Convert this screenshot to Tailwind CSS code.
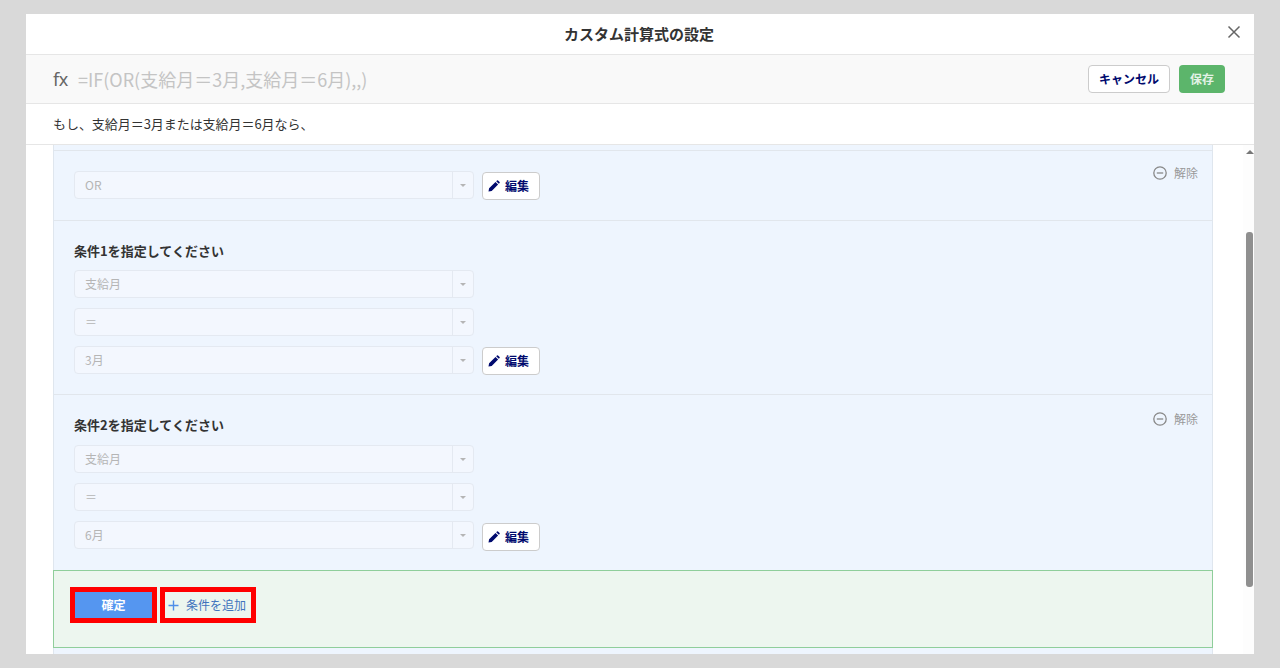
<!DOCTYPE html>
<html lang="ja">
<head>
  <meta charset="UTF-8" />
  <title>カスタム計算式の設定</title>
  <script src="https://cdn.jsdelivr.net/npm/@tailwindcss/browser@4"></script>
</head>
<body class="bg-[#d9d9d9] h-[668px] overflow-hidden font-['Noto_Sans_CJK_JP','Noto_Sans',sans-serif]">
  <div class="mx-[26px] mt-[14px] w-[1228px] h-[640px] bg-white flex flex-col overflow-hidden">
    <!-- Header -->
    <header class="relative h-[41px] shrink-0 border-b border-[#e6e6e6] pr-[2px] flex items-center justify-center">
      <h1 class="text-[15px] font-bold text-[#333]">カスタム計算式の設定</h1>
      <svg class="absolute right-[13px] top-[11px] w-[14px] h-[14px] text-[#666]" viewBox="0 0 14 14" fill="none" stroke="currentColor" stroke-width="1.5"><path d="M1.5 1.5l11 11M12.5 1.5l-11 11"/></svg>
    </header>

    <!-- Formula bar -->
    <div class="h-[49px] shrink-0 bg-[#f9f9f9] border-b border-[#e6e6e6] pl-[27px] pr-[29px] flex items-center">
      <span class="text-[18px] text-[#666] w-[25px] font-['Noto_Sans',sans-serif] tracking-[-0.5px]">fx</span>
      <span class="text-[18px] text-[#c4c4c4]">=IF(OR(支給月＝3月,支給月＝6月),,)</span>
      <button class="ml-auto w-[82px] h-[28px] bg-white border border-[#ccc] rounded-[4px] text-[12px] font-bold text-[#000a6e]">キャンセル</button>
      <button class="ml-[9px] w-[46px] h-[28px] bg-[#5cb56b] rounded-[4px] text-[12px] font-bold text-[#e2f2e5]">保存</button>
    </div>

    <!-- Formula description -->
    <div class="h-[41px] shrink-0 border-b border-[#e6e6e6] pl-[27px] flex items-center text-[13px] tracking-[-0.05px] text-[#333]">もし、支給月＝3月または支給月＝6月なら、</div>

    <!-- Scroll area -->
    <div class="flex-1 min-h-0 flex overflow-hidden">
      <div class="w-[1217px] shrink-0 pl-[27px] pr-[30px]">
        <div class="w-[1160px] h-[510px] bg-[#eef5fe] border-x border-[#dfe6ee] pt-[5px]">
          <!-- OR -->
          <section class="relative h-[71px] border-y border-[#e1e6ec] pl-[20px] pt-[20px]">
            <div class="flex items-start gap-[8px]">
              <div class="w-[400px] h-[28px] bg-[#f3f7fe] border border-[#e4e9f1] rounded-[4px] flex items-center text-[12px] text-[#b5b5b5]"><span class="flex-1 pl-[10px]">OR</span><span class="w-[21px] h-full border-l border-[#e4e9f1] flex items-center justify-center"><span class="border-x-[3px] border-t-[3px] border-x-transparent border-t-[#b5b5b5]"></span></span></div>
              <button class="mt-[1px] w-[58px] h-[28px] bg-white border border-[#ccc] rounded-[4px] pl-[5px] flex items-center gap-[5px] text-[12px] font-bold text-[#000a6e]"><svg class="w-[12px] h-[12px]" viewBox="0 0 12 12" fill="currentColor"><path d="M0.5 11.5l0.6-3.2 6.4-6.4 2.6 2.6-6.4 6.4zM8.2 1.2l0.8-0.8q0.5-0.4 1 0l1.6 1.6q0.4 0.5 0 1l-0.8 0.8z"/></svg>編集</button>
            </div>
            <span class="absolute right-[14px] top-[13px] flex items-center gap-[7px] text-[12px] text-[#999]"><svg class="w-[14px] h-[14px] text-[#888]" viewBox="0 0 14 14" fill="none" stroke="currentColor" stroke-width="1.3"><circle cx="7" cy="7" r="6.2"/><path d="M3.8 7h6.4"/></svg>解除</span>
          </section>

          <!-- Condition 1 -->
          <section class="h-[174px] border-b border-[#e1e6ec] pl-[20px] pt-[19px]">
            <h2 class="h-[30px] text-[13px] font-bold leading-[22px] text-[#333]">条件1を指定してください</h2>
            <div class="flex flex-col gap-[10px]">
              <div class="w-[400px] h-[28px] bg-[#f3f7fe] border border-[#e4e9f1] rounded-[4px] flex items-center text-[12px] text-[#b5b5b5]"><span class="flex-1 pl-[10px]">支給月</span><span class="w-[21px] h-full border-l border-[#e4e9f1] flex items-center justify-center"><span class="border-x-[3px] border-t-[3px] border-x-transparent border-t-[#b5b5b5]"></span></span></div>
              <div class="w-[400px] h-[28px] bg-[#f3f7fe] border border-[#e4e9f1] rounded-[4px] flex items-center text-[12px] text-[#b5b5b5]"><span class="flex-1 pl-[10px]">＝</span><span class="w-[21px] h-full border-l border-[#e4e9f1] flex items-center justify-center"><span class="border-x-[3px] border-t-[3px] border-x-transparent border-t-[#b5b5b5]"></span></span></div>
              <div class="flex items-start gap-[8px]">
                <div class="w-[400px] h-[28px] bg-[#f3f7fe] border border-[#e4e9f1] rounded-[4px] flex items-center text-[12px] text-[#b5b5b5]"><span class="flex-1 pl-[10px]">3月</span><span class="w-[21px] h-full border-l border-[#e4e9f1] flex items-center justify-center"><span class="border-x-[3px] border-t-[3px] border-x-transparent border-t-[#b5b5b5]"></span></span></div>
                <button class="mt-[1px] w-[58px] h-[28px] bg-white border border-[#ccc] rounded-[4px] pl-[5px] flex items-center gap-[5px] text-[12px] font-bold text-[#000a6e]"><svg class="w-[12px] h-[12px]" viewBox="0 0 12 12" fill="currentColor"><path d="M0.5 11.5l0.6-3.2 6.4-6.4 2.6 2.6-6.4 6.4zM8.2 1.2l0.8-0.8q0.5-0.4 1 0l1.6 1.6q0.4 0.5 0 1l-0.8 0.8z"/></svg>編集</button>
              </div>
            </div>
          </section>

          <!-- Condition 2 -->
          <section class="relative h-[175px] pl-[20px] pt-[19px]">
            <h2 class="h-[31px] text-[13px] font-bold leading-[22px] text-[#333]">条件2を指定してください</h2>
            <div class="flex flex-col gap-[10px]">
              <div class="w-[400px] h-[28px] bg-[#f3f7fe] border border-[#e4e9f1] rounded-[4px] flex items-center text-[12px] text-[#b5b5b5]"><span class="flex-1 pl-[10px]">支給月</span><span class="w-[21px] h-full border-l border-[#e4e9f1] flex items-center justify-center"><span class="border-x-[3px] border-t-[3px] border-x-transparent border-t-[#b5b5b5]"></span></span></div>
              <div class="w-[400px] h-[28px] bg-[#f3f7fe] border border-[#e4e9f1] rounded-[4px] flex items-center text-[12px] text-[#b5b5b5]"><span class="flex-1 pl-[10px]">＝</span><span class="w-[21px] h-full border-l border-[#e4e9f1] flex items-center justify-center"><span class="border-x-[3px] border-t-[3px] border-x-transparent border-t-[#b5b5b5]"></span></span></div>
              <div class="flex items-start gap-[8px]">
                <div class="w-[400px] h-[28px] bg-[#f3f7fe] border border-[#e4e9f1] rounded-[4px] flex items-center text-[12px] text-[#b5b5b5]"><span class="flex-1 pl-[10px]">6月</span><span class="w-[21px] h-full border-l border-[#e4e9f1] flex items-center justify-center"><span class="border-x-[3px] border-t-[3px] border-x-transparent border-t-[#b5b5b5]"></span></span></div>
                <button class="mt-[2px] w-[58px] h-[28px] bg-white border border-[#ccc] rounded-[4px] pl-[5px] flex items-center gap-[5px] text-[12px] font-bold text-[#000a6e]"><svg class="w-[12px] h-[12px]" viewBox="0 0 12 12" fill="currentColor"><path d="M0.5 11.5l0.6-3.2 6.4-6.4 2.6 2.6-6.4 6.4zM8.2 1.2l0.8-0.8q0.5-0.4 1 0l1.6 1.6q0.4 0.5 0 1l-0.8 0.8z"/></svg>編集</button>
              </div>
            </div>
            <span class="absolute right-[14px] top-[15px] flex items-center gap-[7px] text-[12px] text-[#999]"><svg class="w-[14px] h-[14px] text-[#888]" viewBox="0 0 14 14" fill="none" stroke="currentColor" stroke-width="1.3"><circle cx="7" cy="7" r="6.2"/><path d="M3.8 7h6.4"/></svg>解除</span>
          </section>

          <!-- Confirm -->
          <section class="-mx-px h-[78px] bg-[#edf6ef] border border-[#8fce9b] pl-[16px] pt-[16px] flex items-start gap-[3px]">
            <button class="w-[87px] h-[36px] border-[5px] border-[#ff0000] bg-[#5596f0] text-[12px] font-bold text-white">確定</button>
            <button class="w-[96px] h-[36px] border-[5px] border-[#ff0000] flex items-center pl-[3px] text-[12px] text-[#3f73bd]"><svg class="w-[11px] h-[11px] mr-[7px] text-[#4f8fe8]" viewBox="0 0 11 11" fill="none" stroke="currentColor" stroke-width="1.4"><path d="M5.5 0.5v10M0.5 5.5h10"/></svg>条件を追加</button>
          </section>
        </div>
      </div>

      <!-- Scrollbar -->
      <div class="w-[11px] shrink-0 bg-[#fdfdfd] flex flex-col items-center">
        <span class="mt-[5px] ml-[2px] border-x-[4px] border-b-[4px] border-x-transparent border-b-[#777]"></span>
        <span class="mt-[78px] ml-[2px] w-[7px] h-[355px] rounded-[3px] bg-[#8f8f8f]"></span>
      </div>
    </div>
  </div>
</body>
</html>
